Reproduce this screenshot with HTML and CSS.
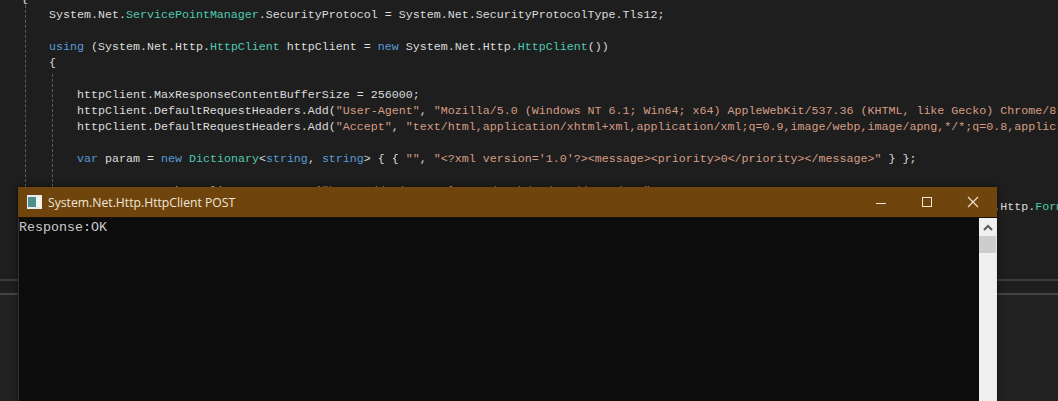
FILE: index.html
```html
<!DOCTYPE html>
<html lang="en">
<head>
<meta charset="utf-8">
<title>System.Net.Http.HttpClient POST</title>
<link rel="stylesheet" href="styles.css">
</head>
<body>
<main class="ide">
  <section class="editor">
    <div class="guide guide-outer"></div>
    <div class="guide guide-inner"></div>
    <pre class="code"><span>{</span>
<span>    System.Net.<b class="ty">ServicePointManager</b>.SecurityProtocol = System.Net.SecurityProtocolType.Tls12;</span>

<span>    <b class="kw">using</b> (System.Net.Http.<b class="ty">HttpClient</b> httpClient = <b class="kw">new</b> System.Net.Http.<b class="ty">HttpClient</b>())</span>
<span>    {</span>

<span>        httpClient.MaxResponseContentBufferSize = 256000;</span>
<span>        httpClient.DefaultRequestHeaders.Add(<b class="st">"User-Agent"</b>, <b class="st">"Mozilla/5.0 (Windows NT 6.1; Win64; x64) AppleWebKit/537.36 (KHTML, like Gecko) Chrome/8</b></span>
<span>        httpClient.DefaultRequestHeaders.Add(<b class="st">"Accept"</b>, <b class="st">"text/html,application/xhtml+xml,application/xml;q=0.9,image/webp,image/apng,*/*;q=0.8,applic</b></span>

<span>        <b class="kw">var</b> param = <b class="kw">new</b> <b class="ty">Dictionary</b>&lt;<b class="kw">string</b>, <b class="kw">string</b>&gt; { { <b class="st">""</b>, <b class="st">"&lt;?xml version='1.0'?&gt;&lt;message&gt;&lt;priority&gt;0&lt;/priority&gt;&lt;/message&gt;"</b> } };</span>

<span>                      httpClient.PostAsync(<b class="st">"https://api.example.com/push/v1/send/HTTP/1.1"</b>,</span>
<span>                                                                                                                                 System.Net.Http.<b class="ty">FormUrlEncodedContent</b>(param));</span></pre>
  </section>
  <section class="panel"></section>

  <article class="window">
    <header class="titlebar">
      <svg class="app-icon" width="15" height="14" viewBox="0 0 15 14" aria-hidden="true">
        <rect width="15" height="14" fill="#e6ecec"/>
        <rect x="1" y="2" width="8" height="10" fill="#4d8f8c"/>
        <rect x="9" y="2" width="5" height="10" fill="#f4f4f0"/>
      </svg>
      <h1 class="title">System.Net.Http.HttpClient POST</h1>
      <div class="controls">
        <svg class="ctl" width="46" height="30" viewBox="0 0 46 30" aria-hidden="true"><path d="M18 16.5h10" stroke="#f3e6d2" fill="none"/></svg>
        <svg class="ctl" width="46" height="30" viewBox="0 0 46 30" aria-hidden="true"><rect x="18.5" y="10.5" width="9" height="9" stroke="#f3e6d2" fill="none"/></svg>
        <svg class="ctl" width="46" height="30" viewBox="0 0 46 30" aria-hidden="true"><path d="M18 10l10 10M28 10L18 20" stroke="#f3e6d2" stroke-width="1.1" fill="none"/></svg>
      </div>
    </header>
    <div class="console">
      <pre class="output">Response:OK</pre>
      <div class="scrollbar">
        <div class="arrow"><svg width="10" height="7" viewBox="0 0 10 7" aria-hidden="true"><path d="M1 6l4-4 4 4" stroke="#5a5a5a" stroke-width="2" fill="none"/></svg></div>
        <div class="thumb"></div>
      </div>
    </div>
  </article>
</main>
</body>
</html>
```
FILE: styles.css
```css
html, body {
  margin: 0;
  padding: 0;
  height: 100%;
  background: #1e1e1e;
  overflow: hidden;
}

.ide {
  position: relative;
  width: 1058px;
  height: 401px;
  display: flex;
  flex-direction: column;
  overflow: hidden;
}

.editor {
  position: relative;
  height: 279px;
  flex: none;
  background: #1e1e1e;
  overflow: hidden;
}

.code {
  margin: -9px 0 0;
  padding-left: 21px;
  font: 11.67px/16px "Liberation Mono", monospace;
  color: #dcdcdc;
  white-space: pre;
}

.code b { font-weight: normal; }
.kw { color: #569cd6; }
.ty { color: #4ec9b0; }
.st { color: #d69d85; }

.guide {
  position: absolute;
  top: 0;
  height: 187px;
  border-left: 1px dashed #5c5c5c;
}
.guide-outer { left: 25px; }
.guide-inner { left: 52px; top: 74px; height: 113px; }

.panel {
  flex: 1;
  background: #222223;
  border-top: 2px solid #3e3e3e;
  box-shadow: inset 0 12px 0 #1e1e1e, inset 0 14px 0 #444444;
}

.window {
  position: absolute;
  left: 18px;
  top: 187px;
  width: 979px;
  height: 214px;
  display: flex;
  flex-direction: column;
  box-shadow: 0 0 6px rgba(0, 0, 0, 0.55);
}

.titlebar {
  height: 30px;
  flex: none;
  display: flex;
  align-items: center;
  padding-left: 9px;
  background: #6f450d;
  border-bottom: 1px solid #1a0f02;
}

.app-icon { flex: none; }

.title {
  margin: 0 0 0 6px;
  flex: 1;
  font: normal 12.2px "Open Sans", sans-serif;
  color: #f0e6d8;
}

.controls {
  display: flex;
  margin-right: 1px;
}

.ctl { display: block; }

.console {
  flex: 1;
  display: flex;
  background: #0c0c0c;
  border-left: 1px solid #3a2d20;
  min-height: 0;
}

.output {
  flex: 1;
  margin: 2px 0 0;
  font: 13.33px/15px "Liberation Mono", monospace;
  color: #cccccc;
}

.scrollbar {
  width: 17px;
  background: #f0f0f0;
  border-right: 1px solid #eee6d8;
  display: flex;
  flex-direction: column;
}

.arrow {
  height: 18px;
  display: flex;
  align-items: center;
  justify-content: center;
}

.thumb {
  height: 17px;
  background: #cdcdcd;
}
```
